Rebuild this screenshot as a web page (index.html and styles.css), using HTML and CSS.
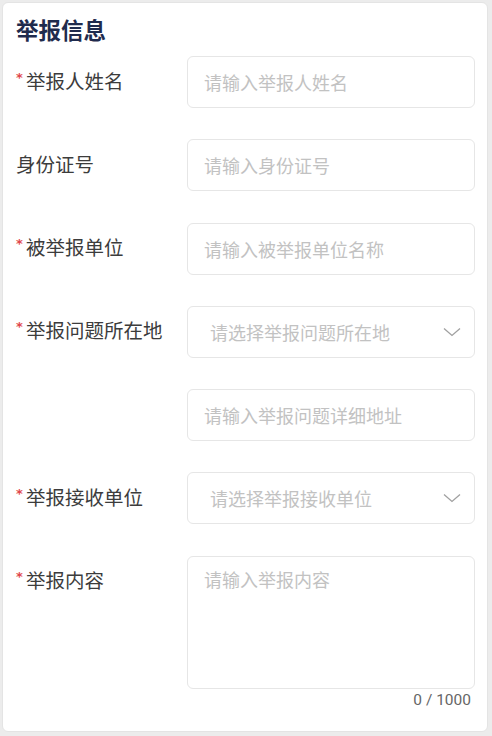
FILE: index.html
```html
<!DOCTYPE html>
<html lang="zh-CN">
<head>
<meta charset="utf-8">
<link rel="stylesheet" href="styles.css">
</head>
<body>
<div class="card">
  <h2 class="title">举报信息</h2>
  <div class="form">
    <div class="row">
      <div class="label"><span class="req">*</span>举报人姓名</div>
      <div class="field"><span class="ph">请输入举报人姓名</span></div>
    </div>
    <div class="row">
      <div class="label">身份证号</div>
      <div class="field"><span class="ph">请输入身份证号</span></div>
    </div>
    <div class="row">
      <div class="label"><span class="req">*</span>被举报单位</div>
      <div class="field"><span class="ph">请输入被举报单位名称</span></div>
    </div>
    <div class="row">
      <div class="label"><span class="req">*</span>举报问题所在地</div>
      <div class="field select"><span class="ph">请选择举报问题所在地</span>
        <svg class="chev" width="18" height="10" viewBox="0 0 18 10"><path d="M1 1.5 L9 8.5 L17 1.5" fill="none" stroke="#a0a0a0" stroke-width="1.3"/></svg>
      </div>
    </div>
    <div class="row">
      <div class="label"></div>
      <div class="field"><span class="ph">请输入举报问题详细地址</span></div>
    </div>
    <div class="row">
      <div class="label"><span class="req">*</span>举报接收单位</div>
      <div class="field select"><span class="ph">请选择举报接收单位</span>
        <svg class="chev" width="18" height="10" viewBox="0 0 18 10"><path d="M1 1.5 L9 8.5 L17 1.5" fill="none" stroke="#a0a0a0" stroke-width="1.3"/></svg>
      </div>
    </div>
    <div class="row">
      <div class="label"><span class="req">*</span>举报内容</div>
      <div class="area-wrap">
        <div class="field area"><span class="ph">请输入举报内容</span></div>
        <div class="count">0 / 1000</div>
      </div>
    </div>
  </div>
</div>
</body>
</html>
```

FILE: styles.css
```css
html, body {
  margin: 0;
  padding: 0;
  background: #ececec;
}
body {
  padding: 2px 4px 3px 2px;
  font-family: "Noto Sans CJK SC", "Noto Sans", sans-serif;
}
.card {
  background: #fff;
  border-radius: 6px;
  border: 1px solid #e4e4e4;
  padding: 10px 12px 23px 13px;
  height: 730px;
  box-sizing: border-box;
}
.title {
  margin: 0;
  font-size: 22.5px;
  line-height: 32px;
  font-weight: 700;
  color: #1f2b4d;
}
.form {
  margin-top: 11px;
  display: flex;
  flex-direction: column;
  gap: 31.3px;
}
.row {
  display: flex;
}
.label {
  width: 171px;
  flex: none;
  height: 52px;
  box-sizing: border-box;
  padding-bottom: 4px;
  display: flex;
  align-items: center;
  font-size: 19.5px;
  color: #3c3c3c;
  white-space: nowrap;
}
.req {
  color: #e0474c;
  font-family: "DejaVu Sans", sans-serif;
  font-weight: 700;
  font-size: 13px;
  width: 10px;
  display: inline-block;
  margin-top: -6px;
}
.field {
  width: 288px;
  height: 52px;
  box-sizing: border-box;
  border: 1px solid #e6e6e6;
  border-radius: 6px;
  display: flex;
  align-items: center;
  padding-left: 16px;
  font-size: 18px;
  color: #c2c2c2;
}
.select {
  padding-left: 22px;
  padding-right: 13px;
  justify-content: space-between;
}
.area-wrap {
  display: flex;
  flex-direction: column;
}
.area {
  height: 133px;
  align-items: flex-start;
  padding-top: 9px;
}
.count {
  text-align: right;
  font-family: "Roboto", "Noto Sans", sans-serif;
  font-size: 15.5px;
  color: #666;
  line-height: 22px;
  padding-right: 4px;
}
```
